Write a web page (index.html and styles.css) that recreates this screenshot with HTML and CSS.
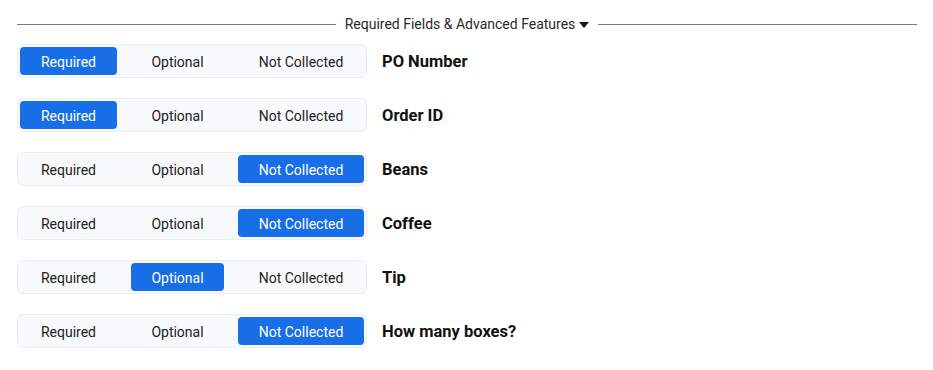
FILE: index.html
```html
<!DOCTYPE html>
<html lang="en">
<head>
  <meta charset="UTF-8">
  <meta name="viewport" content="width=device-width, initial-scale=1.0">
  <title>Required Fields</title>
  <link rel="stylesheet" href="styles.css">
</head>
<body>
  <div class="section-title">
    <span class="rule"></span>
    <span class="title-text">Required Fields &amp; Advanced Features
      <svg class="caret" width="10" height="6" viewBox="0 0 10 6"><path d="M0 0 L10 0 L5 6 Z" fill="#111"/></svg>
    </span>
    <span class="rule"></span>
  </div>

  <div class="fields">
    <div class="field-row">
      <div class="segmented">
        <button class="seg seg-required active">Required</button>
        <button class="seg seg-optional">Optional</button>
        <button class="seg seg-none">Not Collected</button>
      </div>
      <span class="field-name">PO Number</span>
    </div>

    <div class="field-row">
      <div class="segmented">
        <button class="seg seg-required active">Required</button>
        <button class="seg seg-optional">Optional</button>
        <button class="seg seg-none">Not Collected</button>
      </div>
      <span class="field-name">Order ID</span>
    </div>

    <div class="field-row">
      <div class="segmented">
        <button class="seg seg-required">Required</button>
        <button class="seg seg-optional">Optional</button>
        <button class="seg seg-none active">Not Collected</button>
      </div>
      <span class="field-name">Beans</span>
    </div>

    <div class="field-row">
      <div class="segmented">
        <button class="seg seg-required">Required</button>
        <button class="seg seg-optional">Optional</button>
        <button class="seg seg-none active">Not Collected</button>
      </div>
      <span class="field-name">Coffee</span>
    </div>

    <div class="field-row">
      <div class="segmented">
        <button class="seg seg-required">Required</button>
        <button class="seg seg-optional active">Optional</button>
        <button class="seg seg-none">Not Collected</button>
      </div>
      <span class="field-name">Tip</span>
    </div>

    <div class="field-row">
      <div class="segmented">
        <button class="seg seg-required">Required</button>
        <button class="seg seg-optional">Optional</button>
        <button class="seg seg-none active">Not Collected</button>
      </div>
      <span class="field-name">How many boxes?</span>
    </div>
  </div>
</body>
</html>
```

FILE: styles.css
```css
/* Reset */
body, button {
  margin: 0;
  padding: 0;
  box-sizing: border-box;
}

body {
  font-family: Roboto, "Liberation Sans", sans-serif;
  background-color: #ffffff;
  color: #1f1f1f;
  padding: 15px 16px 0 17px;
}

/* Section title with rules */
.section-title {
  display: flex;
  align-items: center;
  gap: 9px;
  height: 18px;
}

.rule {
  flex: 1;
  height: 1px;
  background-color: #7a7a7a;
}

.title-text {
  font-size: 14px;
  color: #2a2a2a;
  display: flex;
  align-items: center;
  gap: 4px;
  white-space: nowrap;
}

.caret {
  margin-top: 2px;
}

/* Field rows */
.fields {
  display: flex;
  flex-direction: column;
  gap: 20px;
  margin-top: 11px;
}

.field-row {
  display: flex;
  align-items: center;
  gap: 15px;
}

.segmented {
  display: grid;
  grid-template-columns: 97px 93px 126px;
  gap: 14px;
  padding: 2px;
  width: 350px;
  height: 34px;
  box-sizing: border-box;
  background-color: #f8f9fb;
  border: 1px solid #eceef1;
  border-radius: 6px;
}

.seg {
  height: 28px;
  padding-top: 2px;
  border: none;
  border-radius: 4px;
  background: transparent;
  font-family: inherit;
  font-size: 14px;
  color: #222222;
  cursor: pointer;
}

.seg.active {
  background-color: #176ee6;
  color: #ffffff;
}

.field-name {
  font-size: 16.5px;
  font-weight: 700;
  color: #111111;
  padding-top: 1px;
}
```
